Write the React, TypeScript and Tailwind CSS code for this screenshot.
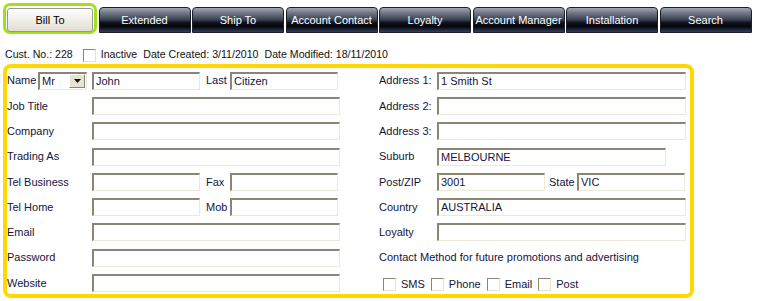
import React from "react";

const tabs = ["Extended", "Ship To", "Account Contact", "Loyalty", "Account Manager", "Installation", "Search"];

function Field({ value = "", w }: { value?: string; w: string }) {
  return (
    <div
      className={`${w} h-[18px] bg-white border-t-2 border-l-2 border-b border-r border-t-[#8a8674] border-l-[#8a8674] border-b-[#ece9d8] border-r-[#ece9d8] pl-[2px] text-[11px] leading-[15px] text-[#14143c]`}
    >
      {value}
    </div>
  );
}

function Check() {
  return (
    <span className="inline-block w-[13px] h-[13px] bg-white border-t border-l border-b border-r border-t-[#8a8674] border-l-[#8a8674] border-b-[#e6e3d6] border-r-[#e6e3d6] shrink-0" />
  );
}

function Label({ text, w = "w-[85px]" }: { text: string; w?: string }) {
  return <span className={`${w} shrink-0 text-[11px] text-[#14143c]`}>{text}</span>;
}

function App() {
  return (
    <div
      className="w-[757px] h-[301px] bg-white relative overflow-hidden"
      style={{ fontFamily: '"Liberation Sans", Arial, sans-serif' }}
    >
      {/* Tabs */}
      <div className="flex items-start pt-[3px] pl-[3px] gap-[1.5px]">
        <div className="w-[94px] h-[31px] rounded-[7px] border-[3px] border-[#9fe21c] p-[1px] flex">
          <div className="flex-1 h-[24px] mt-[1px] rounded-[3px] border border-[#9a9890] bg-gradient-to-b from-[#ffffff] to-[#e2ded2] flex items-center justify-center text-[11px] text-black">
            Bill To
          </div>
        </div>
        {tabs.map((t) => (
          <div
            key={t}
            className="w-[92px] h-[26px] mt-[4px] rounded-t-[4px] border border-[#1c1f28] flex items-center justify-center text-[11px] text-white"
            style={{
              background:
                "linear-gradient(to bottom, #a1a7b2 0%, #6d7483 22%, #3b4252 48%, #0c1019 62%, #05070d 78%, #33405c 100%)",
            }}
          >
            {t}
          </div>
        ))}
      </div>

      {/* Info line */}
      <div className="flex items-center h-[14px] mt-[14px] pl-[5px] text-[10.6px] text-[#111]">
        <span>Cust. No.: 228</span>
        <span className="ml-[10px] mr-[5px] flex">
          <Check />
        </span>
        <span>Inactive</span>
        <span className="ml-[6px]">Date Created: 3/11/2010</span>
        <span className="ml-[6px]">Date Modified: 18/11/2010</span>
      </div>

      {/* Main form */}
      <div className="absolute left-[3px] top-[64px] w-[691px] h-[234px] border-[4px] border-[#ffd800] rounded-[8px]">
        <div className="grid grid-cols-[372px_1fr]" style={{ gridAutoRows: "25.3px" }}>
          {/* Row 1 */}
          <div className="flex items-center">
            <Label text="Name" w="w-[31px]" />
            <div className="w-[49px] h-[18px] flex items-center bg-white border-t-2 border-l-2 border-b border-r border-t-[#8a8674] border-l-[#8a8674] border-b-[#ece9d8] border-r-[#ece9d8]">
              <span className="flex-1 pl-[2px] text-[11px] text-[#14143c]">Mr</span>
              <span className="w-[16px] h-[14px] mr-[1px] bg-[#e6e2d4] border border-t-white border-l-white border-b-[#8a8674] border-r-[#8a8674] flex items-center justify-center">
                <svg width="7" height="4" viewBox="0 0 7 4">
                  <path d="M0 0h7L3.5 4z" fill="#111" />
                </svg>
              </span>
            </div>
            <span className="w-[5px]" />
            <Field value="John" w="w-[108px]" />
            <Label text="Last" w="w-[30px] pl-[6px]" />
            <Field value="Citizen" w="w-[108px]" />
          </div>
          <div className="flex items-center">
            <Label text="Address 1:" w="w-[58px]" />
            <Field value="1 Smith St" w="w-[249px]" />
          </div>

          <div className="flex items-center">
            <Label text="Job Title" />
            <Field w="w-[248px]" />
          </div>
          <div className="flex items-center">
            <Label text="Address 2:" w="w-[58px]" />
            <Field w="w-[249px]" />
          </div>

          <div className="flex items-center">
            <Label text="Company" />
            <Field w="w-[248px]" />
          </div>
          <div className="flex items-center">
            <Label text="Address 3:" w="w-[58px]" />
            <Field w="w-[249px]" />
          </div>

          <div className="flex items-center">
            <Label text="Trading As" />
            <Field w="w-[248px]" />
          </div>
          <div className="flex items-center">
            <Label text="Suburb" w="w-[58px]" />
            <Field value="MELBOURNE" w="w-[229px]" />
          </div>

          <div className="flex items-center">
            <Label text="Tel Business" />
            <Field w="w-[108px]" />
            <Label text="Fax" w="w-[30px] pl-[6px]" />
            <Field w="w-[108px]" />
          </div>
          <div className="flex items-center">
            <Label text="Post/ZIP" w="w-[58px]" />
            <Field value="3001" w="w-[108px]" />
            <Label text="State" w="w-[32px] pl-[4px]" />
            <Field value="VIC" w="w-[108px]" />
          </div>

          <div className="flex items-center">
            <Label text="Tel Home" />
            <Field w="w-[108px]" />
            <Label text="Mob" w="w-[30px] pl-[6px]" />
            <Field w="w-[108px]" />
          </div>
          <div className="flex items-center">
            <Label text="Country" w="w-[58px]" />
            <Field value="AUSTRALIA" w="w-[249px]" />
          </div>

          <div className="flex items-center">
            <Label text="Email" />
            <Field w="w-[248px]" />
          </div>
          <div className="flex items-center">
            <Label text="Loyalty" w="w-[58px]" />
            <Field w="w-[249px]" />
          </div>

          <div className="flex items-center">
            <Label text="Password" />
            <Field w="w-[248px]" />
          </div>
          <div className="flex items-center">
            <span className="text-[11px] text-[#14143c]">Contact Method for future promotions and advertising</span>
          </div>

          <div className="flex items-center">
            <Label text="Website" />
            <Field w="w-[248px]" />
          </div>
          <div className="flex items-center pl-[4px] pt-[3px] text-[11px] text-[#14143c]">
            <Check />
            <span className="ml-[5px] mr-[6px]">SMS</span>
            <Check />
            <span className="ml-[5px] mr-[6px]">Phone</span>
            <Check />
            <span className="ml-[5px] mr-[6px]">Email</span>
            <Check />
            <span className="ml-[5px]">Post</span>
          </div>
        </div>
      </div>
    </div>
  );
}

export default App;
